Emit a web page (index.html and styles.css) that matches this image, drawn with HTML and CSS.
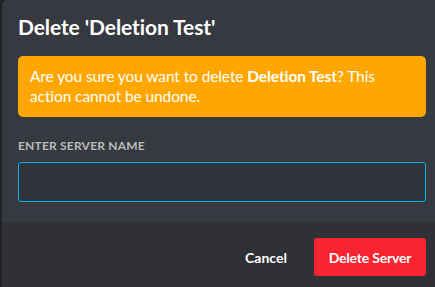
FILE: index.html
```html
<!DOCTYPE html>
<html>
<head>
<meta charset="utf-8">
<link rel="stylesheet" href="styles.css">
</head>
<body>
<div class="modal">
  <div class="content">
    <h2 class="title">Delete 'Deletion Test'</h2>
    <div class="warning">Are you sure you want to delete <strong>Deletion Test</strong>? This action cannot be undone.</div>
    <label class="label" for="server-name">Enter Server Name</label>
    <input class="input" id="server-name" type="text">
  </div>
  <div class="footer">
    <button class="btn-cancel">Cancel</button>
    <button class="btn-delete">Delete Server</button>
  </div>
</div>
</body>
</html>
```
FILE: styles.css
```css
html, body {
  margin: 0;
  padding: 0;
  height: 100%;
  overflow: hidden;
}
body {
  background: #202225;
  font-family: Lato, "Noto Sans", "Liberation Sans", sans-serif;
  color: #fff;
}
.modal {
  margin-left: 2px;
  width: 440px;
  height: 300px;
  background: #36393f;
  border-radius: 5px 5px 0 0;
  display: flex;
  flex-direction: column;
}
.content {
  padding: 15px 16px 20px;
  display: flex;
  flex-direction: column;
}
.title {
  margin: 0;
  font-size: 21px;
  line-height: 24px;
  font-weight: 700;
  color: #fff;
  letter-spacing: -0.1px;
}
.warning {
  margin-top: 17px;
  background: #ffa700;
  border-radius: 5px;
  padding: 10px 12px 11px;
  font-size: 15.5px;
  line-height: 20px;
  color: #fff;
  letter-spacing: -0.1px;
}
.warning strong {
  font-weight: 700;
}
.label {
  margin-top: 21px;
  font-size: 12px;
  line-height: 16px;
  font-weight: 700;
  text-transform: uppercase;
  color: #b9bbbe;
  letter-spacing: 0.2px;
}
.input {
  margin-top: 8px;
  box-sizing: border-box;
  height: 40px;
  width: 100%;
  background: #303339;
  border: 1px solid #00b0f4;
  border-radius: 3px;
  outline: none;
  color: #dcddde;
  font-size: 16px;
  padding: 10px;
}
.footer {
  flex: 1;
  background: #2f3136;
  padding: 16px;
  display: flex;
  justify-content: flex-end;
  align-items: flex-start;
}
.btn-cancel {
  width: 80px;
  height: 38px;
  margin-right: 8px;
  background: none;
  border: none;
  color: #fff;
  font-family: inherit;
  font-size: 14px;
  font-weight: 700;
  padding: 0;
}
.btn-delete {
  width: 112px;
  height: 38px;
  background: #fa2331;
  border: none;
  border-radius: 3px;
  color: #fff;
  font-family: inherit;
  font-size: 14px;
  font-weight: 700;
  letter-spacing: -0.2px;
  padding: 0;
}
```
